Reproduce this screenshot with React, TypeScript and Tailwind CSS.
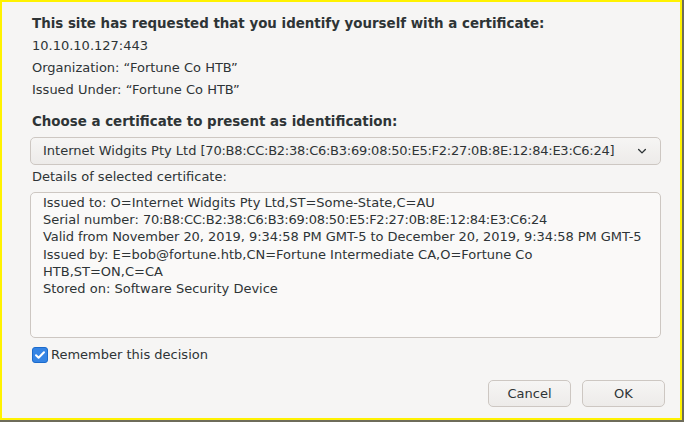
const font = { fontFamily: '"DejaVu Sans", Verdana, sans-serif' };

const Chevron = () => (
  <svg width="12" height="12" viewBox="0 0 16 16" fill="none">
    <path
      d="M3.5 6l4.5 4.5L12.5 6"
      stroke="#2e3436"
      strokeWidth="1.8"
      strokeLinecap="round"
      strokeLinejoin="round"
    />
  </svg>
);

// hex serials render a touch narrower in the original (hinted digits)
const Hex = ({ children }: { children: string }) => (
  <span className="tracking-[-0.25px]">{children}</span>
);

const serial = "70:B8:CC:B2:38:C6:B3:69:08:50:E5:F2:27:0B:8E:12:84:E3:C6:24";

const App = () => {
  return (
    <div className="h-[422px] w-[684px] overflow-hidden bg-[#6e6c5a]" style={font}>
      <div className="flex h-[420px] w-[682px] flex-col border-2 border-[#fff200] bg-[#f6f5f4] pl-[28px] pr-[17px] pt-[11px] text-[13px] text-[#2e3436]">
        <div className="pl-[2px] text-[13.4px] font-bold leading-[22px]">
          This site has requested that you identify yourself with a certificate:
        </div>
        <div className="pl-[2px] leading-[22px]">10.10.10.127:443</div>
        <div className="pl-[2px] leading-[22px]">Organization: “Fortune Co HTB”</div>
        <div className="pl-[2px] leading-[22px]">Issued Under: “Fortune Co HTB”</div>

        <div className="mt-[10px] pl-[2px] text-[13.4px] font-bold leading-[22px]">
          Choose a certificate to present as identification:
        </div>

        <div className="mr-[2px] mt-[4px] flex h-[28px] items-center justify-between rounded-[5px] border border-[#cdc7c2] bg-gradient-to-b from-[#f6f5f4] to-[#edebe9] pl-[12px] pr-[12px]">
          <span>
            Internet Widgits Pty Ltd <Hex>{`[${serial}]`}</Hex>
          </span>
          <Chevron />
        </div>

        <div className="mt-[3px] pl-[2px] leading-[18px]">Details of selected certificate:</div>

        <div className="mr-[2px] mt-[6px] h-[146px] rounded-[5px] border border-[#cdc7c2] bg-[#faf9f8] pl-[12px] pt-[1px] leading-[17.2px]">
          <div>Issued to: O=Internet Widgits Pty Ltd,ST=Some-State,C=AU</div>
          <div>
            Serial number: <Hex>{serial}</Hex>
          </div>
          <div className="tracking-[-0.06px]">
            Valid from November 20, 2019, 9:34:58 PM GMT-5 to December 20, 2019, 9:34:58 PM GMT-5
          </div>
          <div>Issued by: E=bob@fortune.htb,CN=Fortune Intermediate CA,O=Fortune Co</div>
          <div>HTB,ST=ON,C=CA</div>
          <div>Stored on: Software Security Device</div>
        </div>

        <div className="mt-[8px] flex items-center gap-[3px] pl-[2px]">
          <span className="flex h-[16px] w-[16px] items-center justify-center rounded-[3px] border border-[#1b6acb] bg-[#3584e4]">
            <svg width="12" height="12" viewBox="0 0 12 12" fill="none">
              <path
                d="M2 6.2l2.6 2.6L10 3.2"
                stroke="white"
                strokeWidth="2"
                strokeLinecap="round"
                strokeLinejoin="round"
              />
            </svg>
          </span>
          <span className="leading-[18px]">Remember this decision</span>
        </div>

        <div className="-mr-[2px] mb-[11px] mt-auto flex justify-end gap-[11px]">
          <button className="h-[27px] w-[83px] rounded-[5px] border border-[#cdc7c2] bg-gradient-to-b from-[#f6f5f4] to-[#edebe9]">
            Cancel
          </button>
          <button className="h-[27px] w-[83px] rounded-[5px] border border-[#cdc7c2] bg-gradient-to-b from-[#f6f5f4] to-[#edebe9]">
            OK
          </button>
        </div>
      </div>
    </div>
  );
};

export default App;
